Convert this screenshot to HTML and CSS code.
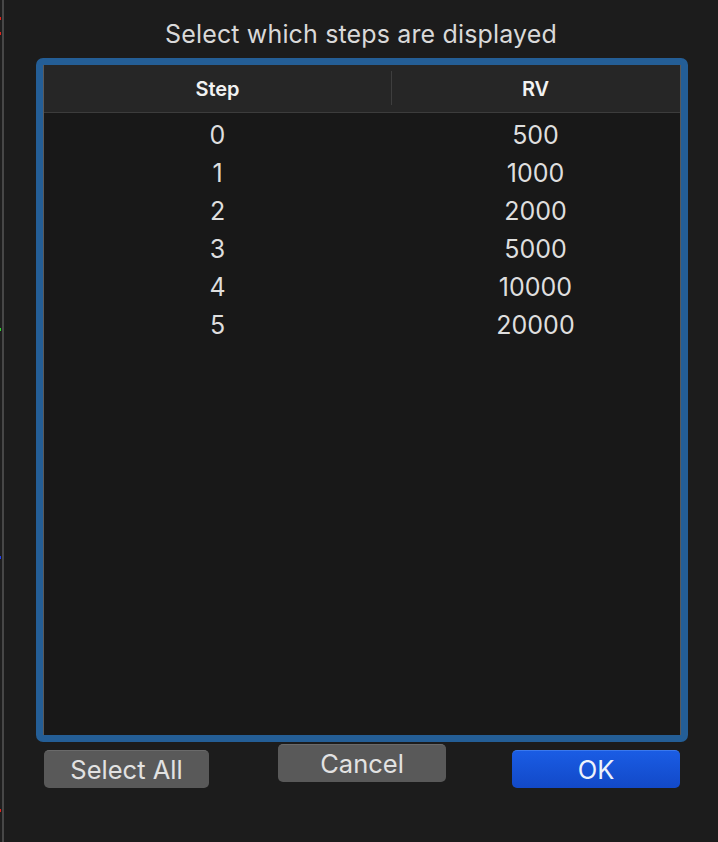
FILE: index.html
```html
<!DOCTYPE html>
<html>
<head>
<meta charset="utf-8">
<link rel="stylesheet" href="styles.css">
</head>
<body>
<div class="edge">
  <span class="mark red m1"></span>
  <span class="mark red m2"></span>
  <span class="mark green m3"></span>
  <span class="mark blue m4"></span>
  <span class="mark red m5"></span>
</div>
<div class="edge-line"></div>
<div class="dialog">
  <div class="title">Select which steps are displayed</div>
  <div class="frame">
    <div class="table">
      <div class="thead">
        <div class="th col-step">Step</div>
        <div class="th col-rv"><span class="divider"></span>RV</div>
      </div>
      <div class="tbody">
        <div class="tr"><div class="td col-step">0</div><div class="td col-rv">500</div></div>
        <div class="tr"><div class="td col-step">1</div><div class="td col-rv">1000</div></div>
        <div class="tr"><div class="td col-step">2</div><div class="td col-rv">2000</div></div>
        <div class="tr"><div class="td col-step">3</div><div class="td col-rv">5000</div></div>
        <div class="tr"><div class="td col-step">4</div><div class="td col-rv">10000</div></div>
        <div class="tr"><div class="td col-step">5</div><div class="td col-rv">20000</div></div>
      </div>
    </div>
  </div>
  <div class="buttons">
    <button class="btn btn-gray btn-low btn-select">Select All</button>
    <button class="btn btn-gray btn-cancel">Cancel</button>
    <button class="btn btn-blue btn-low btn-ok">OK</button>
  </div>
</div>
</body>
</html>
```

FILE: styles.css
```css
* { box-sizing: border-box; }
html, body {
  margin: 0;
  padding: 0;
  width: 718px;
  height: 842px;
  overflow: hidden;
}
body {
  background: #1c1c1c;
  display: flex;
  font-family: Inter, "Noto Sans", sans-serif;
  color: #dcdcdc;
}
.edge {
  position: relative;
  width: 2px;
  height: 842px;
  background: #1e1e1e;
}
.mark {
  position: absolute;
  left: 0;
  width: 1px;
  height: 3px;
}
.red { background: #e0231c; }
.green { background: #2bd52b; }
.blue { background: #1d3df0; }
.m1 { top: 17px; }
.m2 { top: 32px; }
.m3 { top: 328px; }
.m4 { top: 556px; }
.m5 { top: 809px; }
.edge-line {
  width: 2px;
  height: 842px;
  background: #474747;
}
.dialog {
  flex: 1;
  display: flex;
  flex-direction: column;
  padding-top: 19px;
}
.title {
  text-align: center;
  font-size: 25px;
  line-height: 30px;
  color: #d9d9d9;
  letter-spacing: 0.15px;
}
.frame {
  margin-top: 9px;
  margin-left: 32px;
  width: 652px;
  height: 684px;
  border: 7px solid #245e96;
  border-radius: 7px;
}
.table {
  height: 100%;
  border-left: 1px solid #5a5a5a;
  border-right: 1px solid #5a5a5a;
  background: #181818;
  display: flex;
  flex-direction: column;
}
.thead {
  display: flex;
  height: 48px;
  background: #262626;
  border-bottom: 1px solid #3c3c3c;
}
.th {
  display: flex;
  align-items: center;
  justify-content: center;
  font-size: 20px;
  font-weight: 600;
  color: #f2f2f2;
  position: relative;
}
.col-step { width: 347px; }
.col-rv { width: 289px; }
.divider {
  position: absolute;
  left: 0;
  top: 6px;
  width: 1px;
  height: 34px;
  background: #3e3e3e;
}
.tbody {
  padding-top: 3px;
}
.tr {
  display: flex;
  height: 38px;
}
.td {
  display: flex;
  align-items: center;
  justify-content: center;
  font-size: 25px;
  color: #dedede;
}
.buttons {
  display: flex;
  align-items: flex-start;
  margin-left: 40px;
  padding-top: 2px;
}
.btn {
  font-family: Inter, "Noto Sans", sans-serif;
  height: 38px;
  border-radius: 5px;
  font-size: 25.5px;
  padding: 0;
  border: none;
  line-height: 38px;
}
.btn-low { margin-top: 6px; }
.btn-gray {
  background: #595959;
  border-top: 1px solid #6a6a6a;
  color: #e2e2e2;
}
.btn-blue {
  background: linear-gradient(#1a5ce4, #1249c8);
  border-top: 1px solid #3a78ee;
  color: #eef2fb;
}
.btn-select { width: 165px; }
.btn-cancel { width: 168px; margin-left: 69px; }
.btn-ok { width: 168px; margin-left: 66px; }
```
